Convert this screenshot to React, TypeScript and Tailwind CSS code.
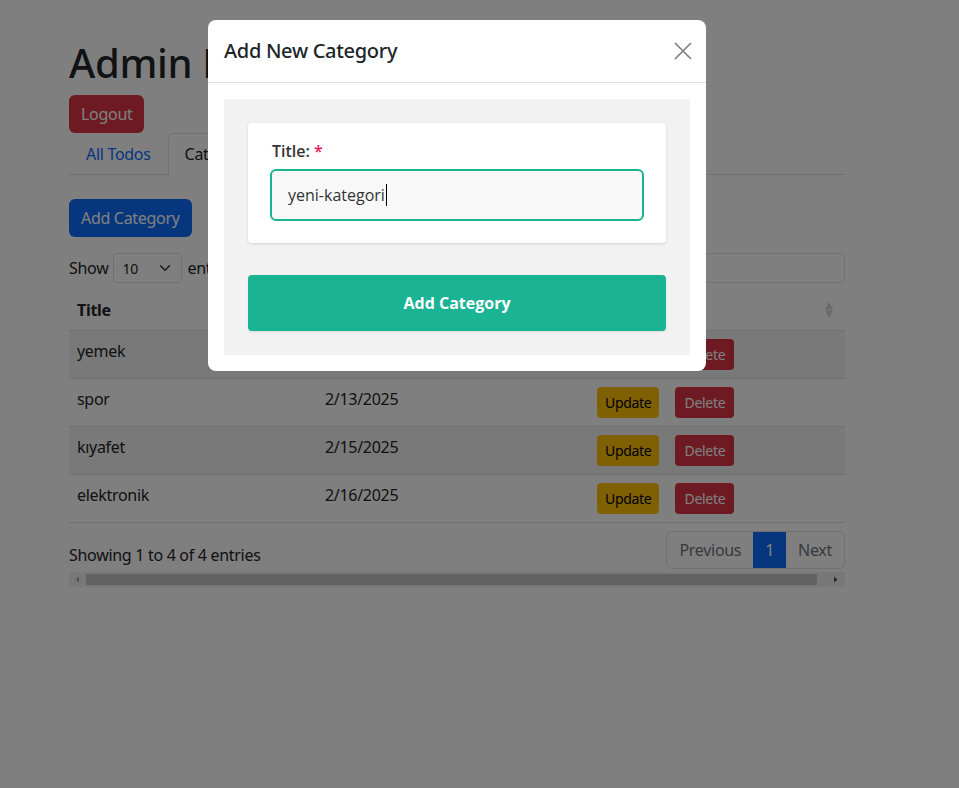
export default function App() {
  const rows = [
    { title: "yemek", date: "2/12/2025" },
    { title: "spor", date: "2/13/2025" },
    { title: "kıyafet", date: "2/15/2025" },
    { title: "elektronik", date: "2/16/2025" },
  ];

  return (
    <div className="relative min-h-[788px] bg-white font-['Noto_Sans',sans-serif] text-[16px] text-[#212529]">
      {/* Page */}
      <div className="ml-[69px] w-[776px] pt-[39px] tracking-[-0.3px]">
        <h1 className="mb-2 text-[40px] font-medium leading-[48px]">Admin Panel</h1>
        <button className="h-[38px] rounded-md bg-[#dc3545] px-3 text-white">Logout</button>

        {/* Tabs */}
        <ul className="flex border-b border-[#dee2e6]">
          <li className="-mb-px">
            <a className="block border border-transparent px-4 py-2 leading-6 text-[#0d6efd]">All Todos</a>
          </li>
          <li className="-mb-px">
            <a className="block rounded-t-md border border-[#dee2e6] border-b-white bg-white px-4 py-2 leading-6">
              Categories
            </a>
          </li>
        </ul>

        <button className="mt-6 h-[38px] rounded-md bg-[#0d6efd] px-3 text-white">Add Category</button>

        {/* Length + search */}
        <div className="mt-4 flex h-[30px] items-center justify-between">
          <div className="flex items-center">
            <span>Show</span>
            <div className="mx-[5px] flex h-[30px] w-[69px] items-center justify-between rounded border border-[#dee2e6] pl-2 pr-[10px] text-[14px]">
              <span>10</span>
              <svg width="12" height="12" viewBox="0 0 16 16" fill="none" stroke="#343a40" strokeWidth="2" strokeLinecap="round" strokeLinejoin="round">
                <path d="M2 5l6 6 6-6" />
              </svg>
            </div>
            <span>entries</span>
          </div>
          <div className="flex items-center">
            <span className="mr-2">Search:</span>
            <div className="h-[30px] w-[180px] rounded border border-[#dee2e6]" />
          </div>
        </div>

        {/* Table */}
        <table className="mt-[7px] w-full border-collapse">
          <thead>
            <tr className="border-b border-[#dee2e6]">
              <th className="w-[248px] px-2 py-2 text-left align-top font-bold leading-6">Title</th>
              <th className="w-[272px] px-2 py-2 text-left align-top font-bold leading-6">Created At</th>
              <th className="px-2 py-2 text-left align-top font-bold leading-6">
                <div className="flex items-center justify-between">
                  <span>Actions</span>
                  <svg width="10" height="18" viewBox="0 0 10 18" className="mr-[3px]">
                    <path d="M5 1L9 8.5H1Z" fill="#000" opacity="0.17" />
                    <path d="M5 17L9 9.5H1Z" fill="#000" opacity="0.17" />
                  </svg>
                </div>
              </th>
            </tr>
          </thead>
          <tbody>
            {rows.map((r, i) => (
              <tr key={r.title} className={`border-b border-[#dee2e6] ${i % 2 === 0 ? "bg-black/5" : ""}`}>
                <td className="px-2 py-2 align-top leading-6">{r.title}</td>
                <td className="px-2 py-2 align-top leading-6">{r.date}</td>
                <td className="px-2 py-2 align-top">
                  <div className="flex items-center gap-4">
                    <button className="h-[31px] rounded bg-[#ffc107] px-2 text-[14px] text-black">Update</button>
                    <button className="h-[31px] rounded bg-[#dc3545] px-[9px] text-[14px] text-white">Delete</button>
                  </div>
                </td>
              </tr>
            ))}
          </tbody>
        </table>

        {/* Footer */}
        <div className="mt-2 flex items-start justify-between">
          <div className="pt-[12px] leading-6">Showing 1 to 4 of 4 entries</div>
          <div className="flex h-[38px] overflow-hidden rounded-md border border-[#dee2e6]">
            <span className="flex items-center px-3 text-[#6c757d]">Previous</span>
            <span className="flex items-center bg-[#0d6efd] px-3 text-white">1</span>
            <span className="flex items-center px-3 text-[#6c757d]">Next</span>
          </div>
        </div>

        {/* Horizontal scrollbar */}
        <div className="mt-[3px] flex h-[15px] items-center bg-[#f1f1f1]">
          <svg width="17" height="15" viewBox="0 0 17 15">
            <path d="M10 4.5L6.5 7.5L10 10.5Z" fill="#a3a3a3" />
          </svg>
          <div className="h-[11px] flex-1 bg-[#c5c5c5]" />
          <svg width="28" height="15" viewBox="0 0 28 15">
            <path d="M17 4.5L20.5 7.5L17 10.5Z" fill="#505050" />
          </svg>
        </div>
      </div>

      {/* Backdrop */}
      <div className="fixed inset-0 bg-black/50" />

      {/* Modal */}
      <div className="absolute left-[208px] top-[20px] w-[498px] rounded-lg bg-white">
        <div className="flex items-center justify-between border-b border-[#dee2e6] px-4 py-4">
          <h5 className="text-[20px] font-medium leading-[30px] tracking-[-0.3px]">Add New Category</h5>
          <svg width="18" height="18" viewBox="0 0 18 18" className="mr-[-2px]" stroke="#000" strokeOpacity="0.5" strokeWidth="1.7">
            <path d="M1 1L17 17M17 1L1 17" />
          </svg>
        </div>
        <div className="p-4">
          <div className="bg-[#f2f2f2] p-6 font-['Open_Sans',sans-serif]">
            <div className="rounded bg-white px-[22px] pb-[22px] pt-[16px] shadow-[0_1px_3px_rgba(0,0,0,0.12)]">
              <label className="mb-[6px] block pl-[2px] text-[16px] font-semibold leading-6 text-[#333]">
                Title: <span className="text-[#e8175d]">*</span>
              </label>
              <div className="flex h-[52px] items-center rounded-md border-2 border-[#1ab394] bg-[#f8f8f8] pl-4 text-[16px] text-[#333]">
                <span>yeni-kategori</span>
                <span className="ml-px h-[22px] w-px bg-black" />
              </div>
            </div>
            <button className="mt-8 h-[56px] w-full rounded bg-[#1ab394] text-[16px] font-bold text-white shadow-[0_1px_2px_rgba(0,0,0,0.1)]">
              Add Category
            </button>
          </div>
        </div>
      </div>
    </div>
  );
}
